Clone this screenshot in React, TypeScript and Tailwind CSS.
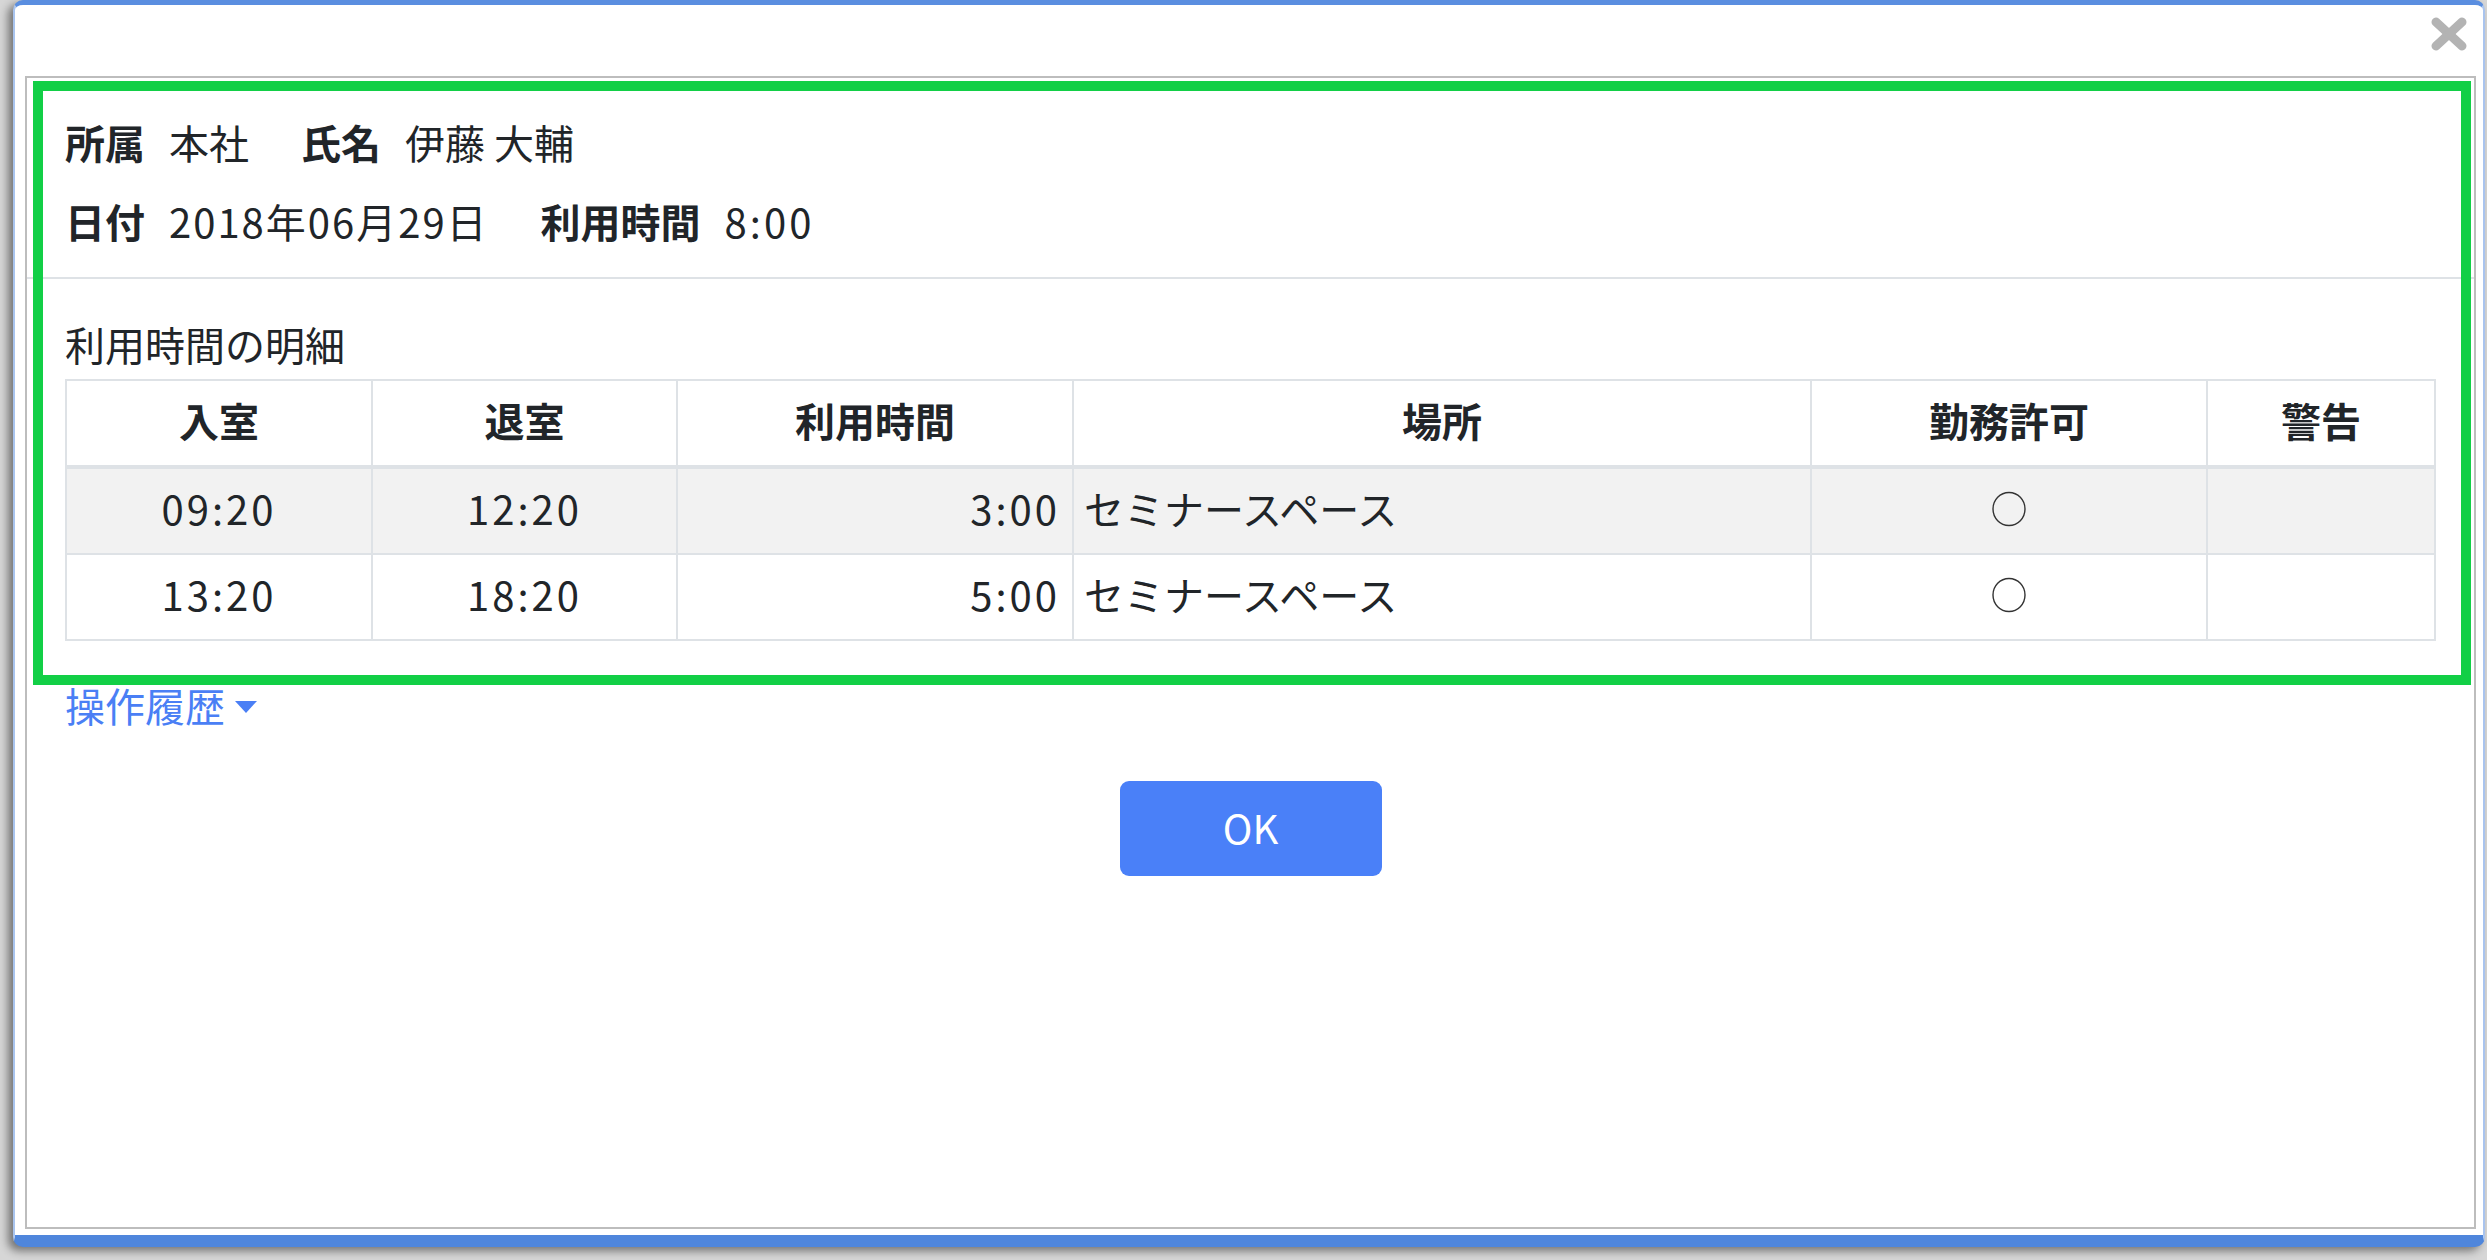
const rows = [
  { inAt: "09:20", outAt: "12:20", used: "3:00", place: "セミナースペース", ok: true, warn: "" },
  { inAt: "13:20", outAt: "18:20", used: "5:00", place: "セミナースペース", ok: true, warn: "" },
];

const cols = "grid grid-cols-[306px_305px_396px_738px_396px_226px]";

function InfoItem({ label, value, num }: { label: string; value: string; num?: string }) {
  return (
    <div className="flex items-center gap-[24px]">
      <span className="font-bold">{label}</span>
      <span className={num}>{value}</span>
    </div>
  );
}

function CloseIcon() {
  return (
    <svg width="36" height="34" viewBox="0 0 36 34" className="blur-[0.7px]">
      <line x1="5" y1="5" x2="31" y2="29" stroke="#b3b3b3" strokeWidth="9" strokeLinecap="round" />
      <line x1="31" y1="5" x2="5" y2="29" stroke="#b3b3b3" strokeWidth="9" strokeLinecap="round" />
    </svg>
  );
}

function Circle() {
  return (
    <svg width="36" height="36" viewBox="0 0 36 36">
      <ellipse cx="18" cy="18" rx="16" ry="16.5" fill="none" stroke="#333" strokeWidth="1.4" />
    </svg>
  );
}

export default function App() {
  return (
    <div className="w-[2487px] h-[1260px] bg-[#d6d6d6] flex pl-[13px] pr-[4px] pb-[13px] overflow-hidden font-['Noto_Sans_CJK_JP','Noto_Sans',sans-serif] text-[40px] text-[#212529]">
      <div className="flex-1 flex flex-col bg-white rounded-[10px] border-t-[5px] border-t-[#5a8ee0] border-x-2 border-x-[#a9c4ee] border-b-[12px] border-b-[#4f86dc] shadow-[-5px_4px_8px_rgba(0,0,0,0.45)]">
        {/* title bar */}
        <div className="h-[71px] flex justify-end items-start pt-[12px] pr-[16px]">
          <CloseIcon />
        </div>

        {/* content */}
        <div className="relative flex-1 ml-[10px] mr-[7px] mb-[6px] border-2 border-[#bdbdbd]">
          <div className="pt-[34px] pb-[26px] px-[38px] border-b-2 border-[#dee2e6] flex flex-col gap-[19px] leading-[60px]">
            <div className="flex items-center gap-[52px]">
              <InfoItem label="所属" value="本社" />
              <InfoItem label="氏名" value="伊藤 大輔" />
            </div>
            <div className="flex items-center gap-[52px]">
              <InfoItem label="日付" value="2018年06月29日" num="tracking-[2px]" />
              <InfoItem label="利用時間" value="8:00" num="tracking-[3px]" />
            </div>
          </div>

          <div className="px-[38px] pt-[35px]">
            <div className="leading-[60px]">利用時間の明細</div>
            <div className="mt-[5px] border-2 border-[#dee2e6]">
              <div className={`${cols} h-[88px] border-b-4 border-[#dee2e6] font-bold`}>
                {["入室", "退室", "利用時間", "場所", "勤務許可", "警告"].map((h, i) => (
                  <div key={h} className={`flex items-center justify-center pb-[7px] ${i < 5 ? "border-r-2 border-[#dee2e6]" : ""}`}>
                    {h}
                  </div>
                ))}
              </div>
              {rows.map((r, i) => (
                <div key={i} className={`${cols} ${i === 0 ? "bg-[#f2f2f2] h-[86px] border-b-2 border-[#dee2e6]" : "h-[84px]"}`}>
                  <div className="flex items-center justify-center pb-[7px] tracking-[3px] border-r-2 border-[#dee2e6]">{r.inAt}</div>
                  <div className="flex items-center justify-center pb-[7px] tracking-[3px] border-r-2 border-[#dee2e6]">{r.outAt}</div>
                  <div className="flex items-center justify-end pb-[7px] pr-[12px] tracking-[3px] border-r-2 border-[#dee2e6]">{r.used}</div>
                  <div className="flex items-center pb-[7px] pl-[10px] border-r-2 border-[#dee2e6]">{r.place}</div>
                  <div className="flex items-center justify-center pb-[4px] border-r-2 border-[#dee2e6]">{r.ok && <Circle />}</div>
                  <div className="flex items-center justify-center">{r.warn}</div>
                </div>
              ))}
            </div>

            <div className="mt-[36px] flex items-center gap-[10px] leading-[60px] text-[#4a7ff5]">
              <span className="relative -top-[2px]">操作履歴</span>
              <svg width="22" height="12" viewBox="0 0 22 12">
                <polygon points="0,0 22,0 11,12" fill="#4a7ff5" />
              </svg>
            </div>

            <div className="mt-[44px] flex justify-center">
              <button className="w-[262px] h-[95px] pb-[4px] rounded-[9px] bg-[#4a80f8] text-white text-[40px]">OK</button>
            </div>
          </div>

          {/* highlight frame */}
          <div className="absolute left-[6px] right-[3px] top-[3px] h-[604px] border-[10px] border-[#12cf46] pointer-events-none" />
        </div>
      </div>
    </div>
  );
}
